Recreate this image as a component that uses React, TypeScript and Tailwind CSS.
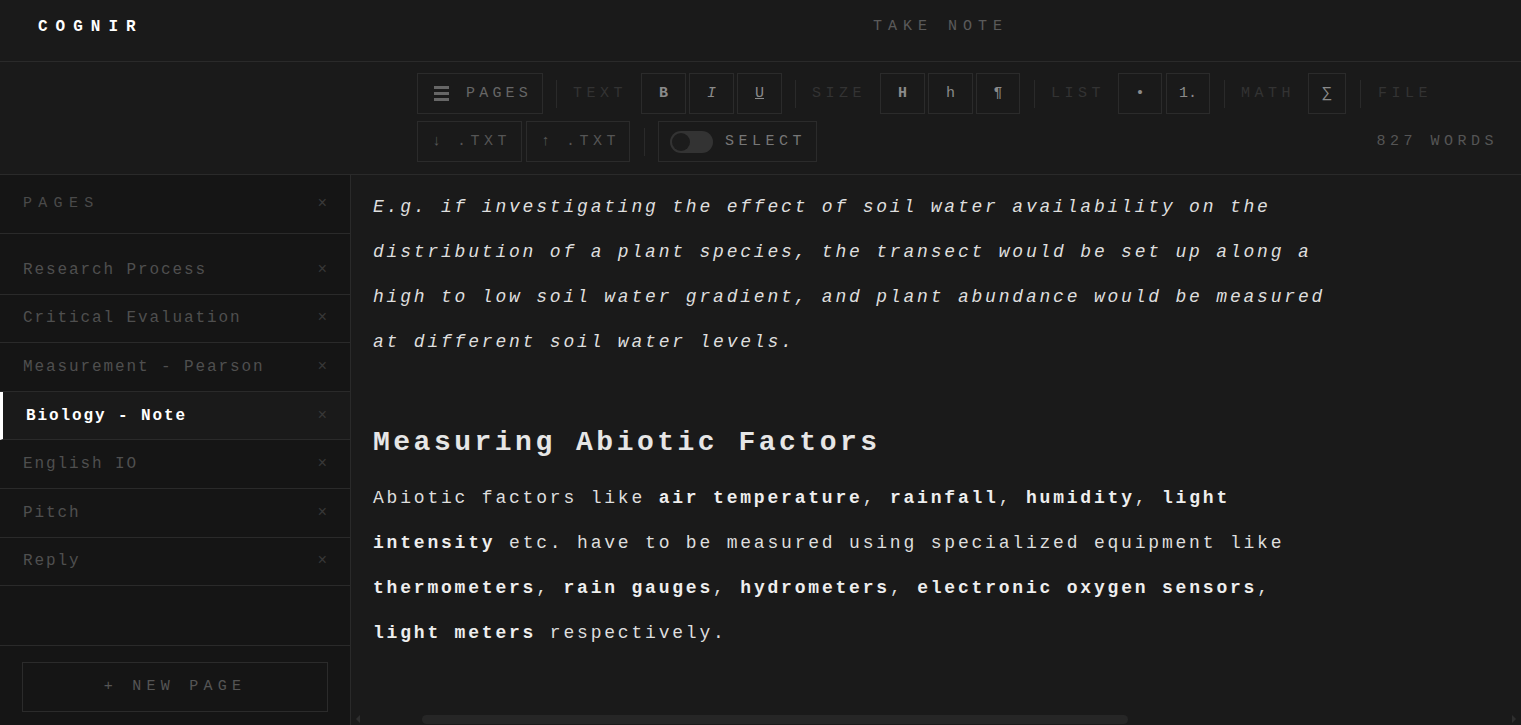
import React from 'react';

const mono = "font-['Courier_New','Nimbus_Mono_PS','FreeMono','Liberation_Mono',monospace]";

const pages = [
  { title: 'Research Process' },
  { title: 'Critical Evaluation' },
  { title: 'Measurement - Pearson' },
  { title: 'Biology - Note', active: true },
  { title: 'English IO' },
  { title: 'Pitch' },
  { title: 'Reply' },
];

const Sep: React.FC<{ className?: string }> = ({ className = '' }) => (
  <div className={`w-px h-[28px] bg-[#2a2a2a] ${className}`} />
);

const Label: React.FC<{ children: React.ReactNode; className?: string }> = ({ children, className = '' }) => (
  <span className={`pt-[2px] text-[15px] tracking-[0.3em] text-[#333333] ${className}`}>{children}</span>
);

const ToolBtn: React.FC<{ children: React.ReactNode; className?: string }> = ({ children, className = '' }) => (
  <button className={`h-[41px] pt-[2px] border border-[#2b2b2b] flex items-center justify-center text-[15px] text-[#8a8a8a] ${className}`}>
    {children}
  </button>
);

const Toolbar: React.FC = () => (
  <div className="border-b border-[#2a2a2a] pl-[417px] pr-[25px] pt-[11px] pb-[12px] flex flex-col gap-[7px]">
    <div className="flex items-center">
      <ToolBtn className="w-[126px] justify-start pl-[16px] gap-[17px] text-[#666666]">
        <svg width="15" height="15" viewBox="0 0 15 15" className="-mt-[2px]">
          <rect x="0" y="0" width="15" height="3" fill="#666" />
          <rect x="0" y="6" width="15" height="3" fill="#666" />
          <rect x="0" y="12" width="15" height="3" fill="#666" />
        </svg>
        <span className="tracking-[0.28em]">PAGES</span>
      </ToolBtn>
      <Sep className="ml-[13px] mr-[16px]" />
      <Label className="w-[55px] mr-[13px]">TEXT</Label>
      <div className="flex gap-[3px]">
        <ToolBtn className="w-[45px] font-bold">B</ToolBtn>
        <ToolBtn className="w-[45px] italic">I</ToolBtn>
        <ToolBtn className="w-[45px] underline">U</ToolBtn>
      </div>
      <Sep className="ml-[13px] mr-[16px]" />
      <Label className="w-[54px] mr-[14px]">SIZE</Label>
      <div className="flex gap-[3px]">
        <ToolBtn className="w-[45px] font-bold">H</ToolBtn>
        <ToolBtn className="w-[45px]">h</ToolBtn>
        <ToolBtn className="w-[44px]">¶</ToolBtn>
      </div>
      <Sep className="ml-[14px] mr-[16px]" />
      <Label className="w-[54px] mr-[13px]">LIST</Label>
      <div className="flex gap-[4px]">
        <ToolBtn className="w-[44px]">•</ToolBtn>
        <ToolBtn className="w-[44px]">1.</ToolBtn>
      </div>
      <Sep className="ml-[14px] mr-[16px]" />
      <Label className="w-[53px] mr-[14px]">MATH</Label>
      <ToolBtn className="w-[38px]">∑</ToolBtn>
      <Sep className="ml-[14px] mr-[17px]" />
      <Label>FILE</Label>
    </div>
    <div className="flex items-center">
      <ToolBtn className="w-[105px] justify-start pl-[14px] gap-[16px] text-[#555555]">
        <span>↓</span>
        <span className="tracking-[0.3em]">.TXT</span>
      </ToolBtn>
      <ToolBtn className="w-[104px] ml-[4px] justify-start pl-[14px] gap-[16px] text-[#555555]">
        <span>↑</span>
        <span className="tracking-[0.3em]">.TXT</span>
      </ToolBtn>
      <Sep className="ml-[14px] mr-[13px]" />
      <ToolBtn className="w-[159px] justify-start pl-[11px] gap-[12px] text-[#777777]">
        <span className="-mt-[2px] w-[43px] h-[22px] rounded-full bg-[#333333] flex items-center pl-[2px]">
          <span className="w-[18px] h-[18px] rounded-full bg-[#1c1c1c]" />
        </span>
        <span className="tracking-[0.3em]">SELECT</span>
      </ToolBtn>
      <span className="ml-auto pt-[2px] text-[15px] tracking-[0.3em] text-[#555555] -mr-[2px]">827 WORDS</span>
    </div>
  </div>
);

const Sidebar: React.FC = () => (
  <aside className="w-[351px] shrink-0 bg-[#151515] border-r border-[#2a2a2a] flex flex-col">
    <div className="h-[59px] border-b border-[#2a2a2a] flex items-center justify-between pl-[23px] pr-[23px]">
      <span className="text-[15px] tracking-[0.42em] text-[#4a4a4a]">PAGES</span>
      <span className="text-[16px] text-[#3a3a3a]">×</span>
    </div>
    <div className="flex-1 pt-[12px]">
      {pages.map(p => (
        <div
          key={p.title}
          className={`h-[48.6px] border-b border-[#2a2a2a] flex items-center justify-between pr-[23px] pl-[23px] ${
            p.active ? 'border-l-[3px] border-l-white bg-[#1a1a1a]' : ''
          }`}
        >
          <span
            className={`text-[16px] tracking-[1.9px] ${p.active ? 'text-white font-bold' : 'text-[#4f4f4f]'}`}
          >
            {p.title}
          </span>
          <span className="text-[16px] text-[#383838]">×</span>
        </div>
      ))}
    </div>
    <div className="h-[80px] border-t border-[#2a2a2a] px-[22px] pt-[16px]">
      <button className="w-full h-[50px] border border-[#2b2b2b] text-[15px] tracking-[0.35em] text-[#555555]">
        + NEW PAGE
      </button>
    </div>
  </aside>
);

const Editor: React.FC = () => (
  <main className="flex-1 flex flex-col min-w-0 bg-[#1a1a1a]">
    <div className="flex-1 overflow-hidden pl-[22px] pt-[10px] text-[#dedede]">
      <div className="max-w-[965px] text-[18px] tracking-[2.8px] leading-[45px]">
        <p className="italic">
          E.g. if investigating the effect of soil water availability on the distribution of a plant species, the
          transect would be set up along a high to low soil water gradient, and plant abundance would be measured at
          different soil water levels.
        </p>
        <h2 className="mt-[60px] mb-[15px] text-[28px] leading-[36px] tracking-[3.5px] font-bold text-[#e6e6e6]">
          Measuring Abiotic Factors
        </h2>
        <p>
          Abiotic factors like <b className="text-[#eeeeee]">air temperature</b>, <b className="text-[#eeeeee]">rainfall</b>,{' '}
          <b className="text-[#eeeeee]">humidity</b>, <b className="text-[#eeeeee]">light intensity</b> etc. have to be
          measured using specialized equipment like <b className="text-[#eeeeee]">thermometers</b>,{' '}
          <b className="text-[#eeeeee]">rain gauges</b>, <b className="text-[#eeeeee]">hydrometers</b>,{' '}
          <b className="text-[#eeeeee]">electronic oxygen sensors</b>, <b className="text-[#eeeeee]">light meters</b>{' '}
          respectively.
        </p>
      </div>
    </div>
    {/* horizontal scrollbar */}
    <div className="h-[12px] flex items-center px-[5px] gap-[62px]">
      <div className="w-0 h-0 border-y-[4px] border-y-transparent border-r-[4px] border-r-[#2e2e2e]" />
      <div className="w-[706px] h-[9px] rounded-full bg-[#262626]" />
      <div className="ml-auto w-0 h-0 border-y-[4px] border-y-transparent border-l-[4px] border-l-[#2e2e2e]" />
    </div>
  </main>
);

export default function App() {
  return (
    <div className={`h-screen flex flex-col bg-[#1a1a1a] overflow-hidden ${mono}`}>
      <header className="h-[62px] shrink-0 border-b border-[#2a2a2a] relative flex items-start">
        <span className="mt-[15px] pl-[38px] text-[16px] font-bold tracking-[8px] text-white">COGNIR</span>
        <span className="absolute top-[16px] left-1/2 -translate-x-1/2 ml-[180px] text-[15px] tracking-[0.4em] text-[#5a5a5a]">
          TAKE NOTE
        </span>
      </header>
      <Toolbar />
      <div className="flex-1 flex min-h-0">
        <Sidebar />
        <Editor />
      </div>
    </div>
  );
}
